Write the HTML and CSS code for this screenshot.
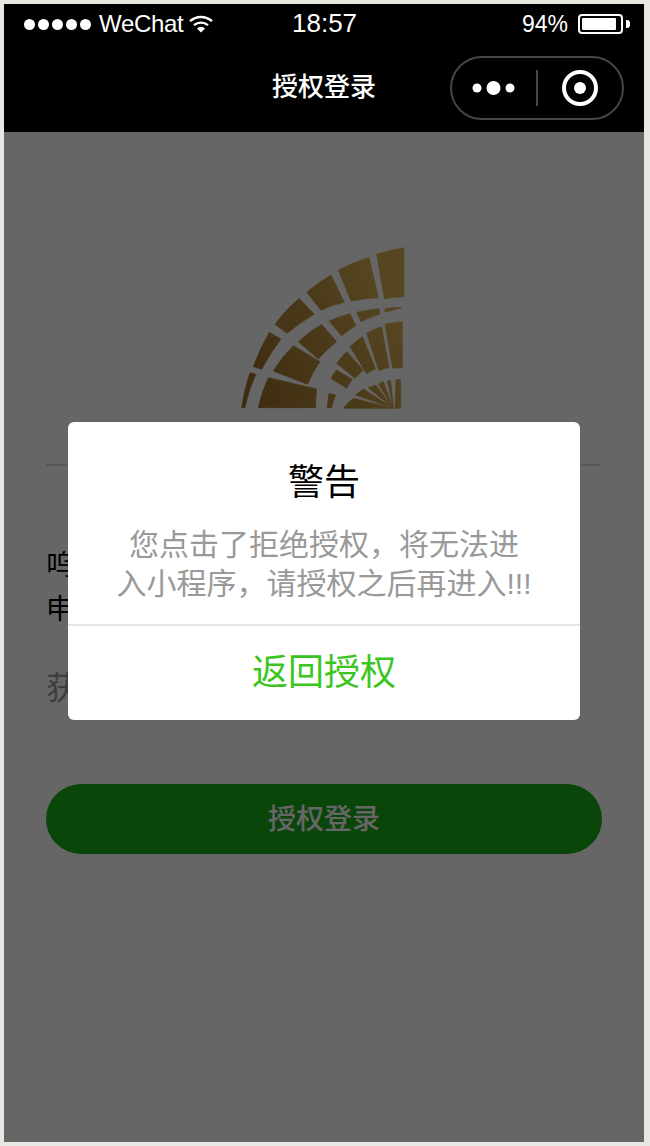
FILE: index.html
```html
<!DOCTYPE html>
<html lang="zh-CN">
<head>
<meta charset="utf-8">
<title>授权登录</title>
<link rel="stylesheet" href="styles.css">
</head>
<body>
<div class="phone">
  <header class="top">
    <div class="status">
      <div class="status-left">
        <span class="signal"><i></i><i></i><i></i><i></i><i></i></span>
        <span class="carrier">WeChat</span>
        <svg class="wifi" width="24" height="18" viewBox="0 0 24 18"><path d="M1 6.2C7.2.6 16.8.6 23 6.2" fill="none" stroke="#fff" stroke-width="2.4"/><path d="M5 10.2c4-3.4 10-3.4 14 0" fill="none" stroke="#fff" stroke-width="2.4"/><path d="M12 17.6l-4-4.2c2.300-1.800 5.700-1.800 8 0z" fill="#fff"/></svg>
      </div>
      <span class="time">18:57</span>
      <div class="status-right">
        <span class="percent">94%</span>
        <span class="battery"><span class="battery-fill"></span></span>
        <span class="battery-nib"></span>
      </div>
    </div>
    <nav class="nav">
      <span class="nav-title">授权登录</span>
      <div class="capsule">
        <svg class="capsule-dots" width="46" height="16" viewBox="0 0 46 16"><circle cx="5" cy="8" r="4.500" fill="#fff"/><circle cx="21.500" cy="8" r="7" fill="#fff"/><circle cx="38" cy="8" r="4.500" fill="#fff"/></svg>
        <span class="capsule-line"></span>
        <svg class="capsule-target" width="36" height="36" viewBox="0 0 36 36"><circle cx="18" cy="18" r="16" fill="none" stroke="#fff" stroke-width="4"/><circle cx="18" cy="18" r="6" fill="#fff"/></svg>
      </div>
    </nav>
  </header>
  <main class="page">
    <svg class="logo" width="195" height="195" viewBox="0 0 585 585">
      <defs>
        <linearGradient id="gold" gradientUnits="userSpaceOnUse" x1="60" y1="520" x2="537" y2="300">
          <stop offset="0" stop-color="#966a28"/>
          <stop offset="1" stop-color="#d6ae52"/>
        </linearGradient>
      </defs>
      <g fill="url(#gold)" stroke="url(#gold)" stroke-width="2">
        <path d="M455 58Q495 44 537 38V185Q505 186 478 192Z"/>
        <path d="M340 105Q385 82 432 67L460 188Q418 190 378 198Z"/>
        <path d="M245 172Q280 142 318 120L358 202Q322 210 288 226Z"/>
        <path d="M150 268Q182 224 222 190L268 238Q225 262 186 295Z"/>
        <path d="M85 395Q105 340 133 292L168 312Q135 355 110 403Z"/>
        <path d="M50 518Q58 462 75 413L93 418Q70 465 60 518Z"/>
        <path d="M480 221Q505 217 530 218L480 232Z"/>
        <path d="M395 232Q428 224 462 221L465 237Q435 246 408 260Z"/>
        <path d="M313 258Q342 244 375 236L392 272Q370 285 350 303Z"/>
        <path d="M220 320Q252 290 290 268L335 320Q305 344 280 372Z"/>
        <path d="M145 408Q170 366 205 332L285 380Q262 412 248 448Z"/>
        <path d="M100 518Q110 470 130 428L275 462Q272 490 272 518Z"/>
        <path d="M480 268Q505 262 532 260V398L503 400Z"/>
        <path d="M425 295Q447 282 470 275L492 398Q476 400 462 408Z"/>
        <path d="M375 335Q392 318 412 305L452 402Q437 408 425 416Z"/>
        <path d="M335 385Q348 366 365 350L415 405Q402 418 390 430Z"/>
        <path d="M318 430Q324 417 335 405L382 433Q373 446 365 460Z"/>
        <path d="M307 518Q308 497 312 475L332 480Q325 498 320 518Z"/>
        <path d="M355 520Q368 504 385 490L505 520Z"/>
        <path d="M392 480Q403 470 415 462L505 520Z"/>
        <path d="M430 458L452 450L505 520Z"/>
        <path d="M460 447L475 440L505 520Z"/>
        <path d="M487 438L497 436L505 520Z"/>
        <path d="M513 434L527 433V520H510Z"/>
      </g>
    </svg>
    <hr class="rule">
    <p class="intro">呜</p>
    <p class="intro">申</p>
    <p class="note">获</p>
    <button class="login" type="button">授权登录</button>
  </main>
  <div class="mask">
    <section class="dialog">
      <h1 class="dialog-title">警告</h1>
      <p class="dialog-body">您点击了拒绝授权&#65292;将无法进<br>入小程序&#65292;请授权之后再进入<span class="bangs">!!!</span></p>
      <div class="dialog-action">返回授权</div>
    </section>
  </div>
</div>
</body>
</html>
```
FILE: styles.css
```css
* { box-sizing: border-box; }
html, body { margin: 0; padding: 0; }
body {
  width: 650px;
  height: 1146px;
  padding: 4px 6px 4px 4px;
  overflow: hidden;
  background: #e8e8e3;
  font-family: "Noto Sans CJK SC", "Liberation Sans", sans-serif;
}
.phone {
  position: relative;
  width: 640px;
  height: 1138px;
  display: flex;
  flex-direction: column;
  background: #fff;
}
.top { background: #000; color: #fff; height: 128px; flex: none; }
.status {
  height: 40px;
  position: relative;
  display: flex;
  align-items: center;
  justify-content: space-between;
  padding: 0 14px 0 20px;
  font-family: "Liberation Sans", sans-serif;
  font-size: 24px;
}
.status-left, .status-right { display: flex; align-items: center; }
.signal { display: flex; gap: 3px; }
.signal i { width: 11px; height: 11px; border-radius: 50%; background: #fff; display: block; }
.carrier { margin-left: 8px; letter-spacing: -0.3px; }
.wifi { margin-left: 6px; }
.time { font-size: 26px; position: absolute; left: 288px; top: 4px; }
.percent { font-size: 23px; }
.battery {
  margin-left: 10px;
  width: 45px;
  height: 20px;
  border: 2px solid #fff;
  border-radius: 4px;
  padding: 2px;
  display: block;
}
.battery-fill { display: block; width: 92%; height: 100%; background: #fff; border-radius: 1px; }
.battery-nib { width: 4px; height: 8px; background: #fff; border-radius: 0 3px 3px 0; margin-left: 3px; }
.nav {
  height: 88px;
  padding-bottom: 8px;
  position: relative;
  display: flex;
  align-items: center;
  justify-content: center;
}
.nav-title { font-size: 26px; font-weight: 500; }
.capsule {
  position: absolute;
  left: 446px;
  top: 12px;
  width: 174px;
  height: 64px;
  border: 2px solid #454545;
  border-radius: 32px;
  display: flex;
  align-items: center;
  padding-left: 20px;
}
.capsule-line { width: 2px; height: 36px; background: #454545; margin-left: 18px; }
.capsule-target { margin-left: 24px; }
.page { flex: 1; padding: 103px 42px 0; }
.logo { display: block; margin-left: 179px; }
.rule { margin: 34px 2px 0 0; border: 0; height: 2px; background: #ddd; }
.intro { margin: 0; font-size: 28px; line-height: 44px; color: #000; }
.rule + .intro { margin-top: 75px; }
.note { margin: 34px 0 0; font-size: 32px; line-height: 44px; color: #999; }
.login {
  display: block;
  width: 556px;
  height: 70px;
  margin-top: 77px;
  padding: 0 0 4px;
  border: 0;
  border-radius: 35px;
  background: #1aad19;
  color: #fff;
  font: 500 28px "Noto Sans CJK SC", sans-serif;
}
.mask {
  position: absolute;
  inset: 128px 0 0 0;
  background: rgba(0, 0, 0, 0.6);
  padding: 290px 64px 0;
}
.dialog { width: 512px; height: 298px; background: #fff; border-radius: 6px; text-align: center; display: flex; flex-direction: column; }
.dialog-title { margin: 31px 0 0; font-size: 36px; font-weight: 400; line-height: 52px; color: #000; }
.dialog-body { margin: 18px 0 0; padding: 0 20px; height: 101px; font-size: 30px; line-height: 39px; color: #999; }
.bangs { font-family: "Liberation Sans", sans-serif; }
.dialog-action {
  flex: 1;
  padding-bottom: 8px;
  border-top: 2px solid #e5e5e5;
  display: flex;
  align-items: center;
  justify-content: center;
  font-size: 36px;
  color: #3cc51f;
}
```
